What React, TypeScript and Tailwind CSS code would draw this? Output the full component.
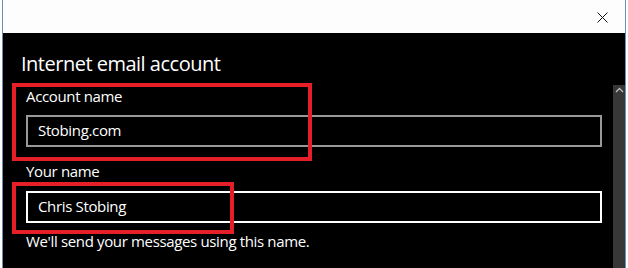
const font = "font-['Open_Sans','Noto_Sans',sans-serif]";

export default function App() {
    return (
        <div className={`relative w-[628px] h-[268px] overflow-hidden bg-white ${font}`}>
            <div className="ml-[2px] w-[624px] h-full flex flex-col border-x border-[#6a8fb8]">
                {/* title bar */}
                <div className="h-[33px] bg-[#fdfdfd] flex items-center justify-end pr-[17px]">
                    <svg width="11" height="11" viewBox="0 0 11 11" className="mt-[1px]">
                        <path d="M0.5 0.5 L10.5 10.5 M10.5 0.5 L0.5 10.5" stroke="#111" strokeWidth="1" />
                    </svg>
                </div>

                <div className="flex-1 flex bg-black text-white tracking-[-0.35px]">
                    <div className="flex-1 pl-[23px] pr-[11px]">
                        <h1 className="-ml-[5px] pt-[17px] text-[20px] leading-[28px] font-normal tracking-[-0.5px]">Internet email account</h1>

                        <div className="mt-[8px] flex flex-col">
                            <label className="text-[15px] leading-[20px]">Account name</label>
                            <div className="mt-[9px] h-[32px] border-2 border-[#999999] pl-[10px] pt-[3px] text-[15px] leading-[20px]">
                                Stobing.com
                            </div>
                        </div>

                        <div className="mt-[14px] flex flex-col">
                            <label className="text-[15px] leading-[20px]">Your name</label>
                            <div className="mt-[10px] h-[32px] border-2 border-white pl-[10px] pt-[3px] text-[15px] leading-[20px]">
                                Chris Stobing
                            </div>
                        </div>

                        <p className="mt-[8px] text-[15px] leading-[20px]">We'll send your messages using this name.</p>
                    </div>

                    {/* scrollbar */}
                    <div className="w-[12px] mt-[52px] bg-[#373737] flex justify-center pt-[2px]">
                        <svg width="9" height="6" viewBox="0 0 9 6">
                            <path d="M1 5 L4.5 1.5 L8 5" stroke="#bdbdbd" strokeWidth="1.3" fill="none" />
                        </svg>
                    </div>
                </div>
            </div>

            {/* red annotation boxes */}
            <div className="absolute left-[12px] top-[83px] w-[300px] h-[78px] border-4 border-[#e61e28]" />
            <div className="absolute left-[12px] top-[182px] w-[222px] h-[52px] border-4 border-[#e61e28]" />
        </div>
    );
}
